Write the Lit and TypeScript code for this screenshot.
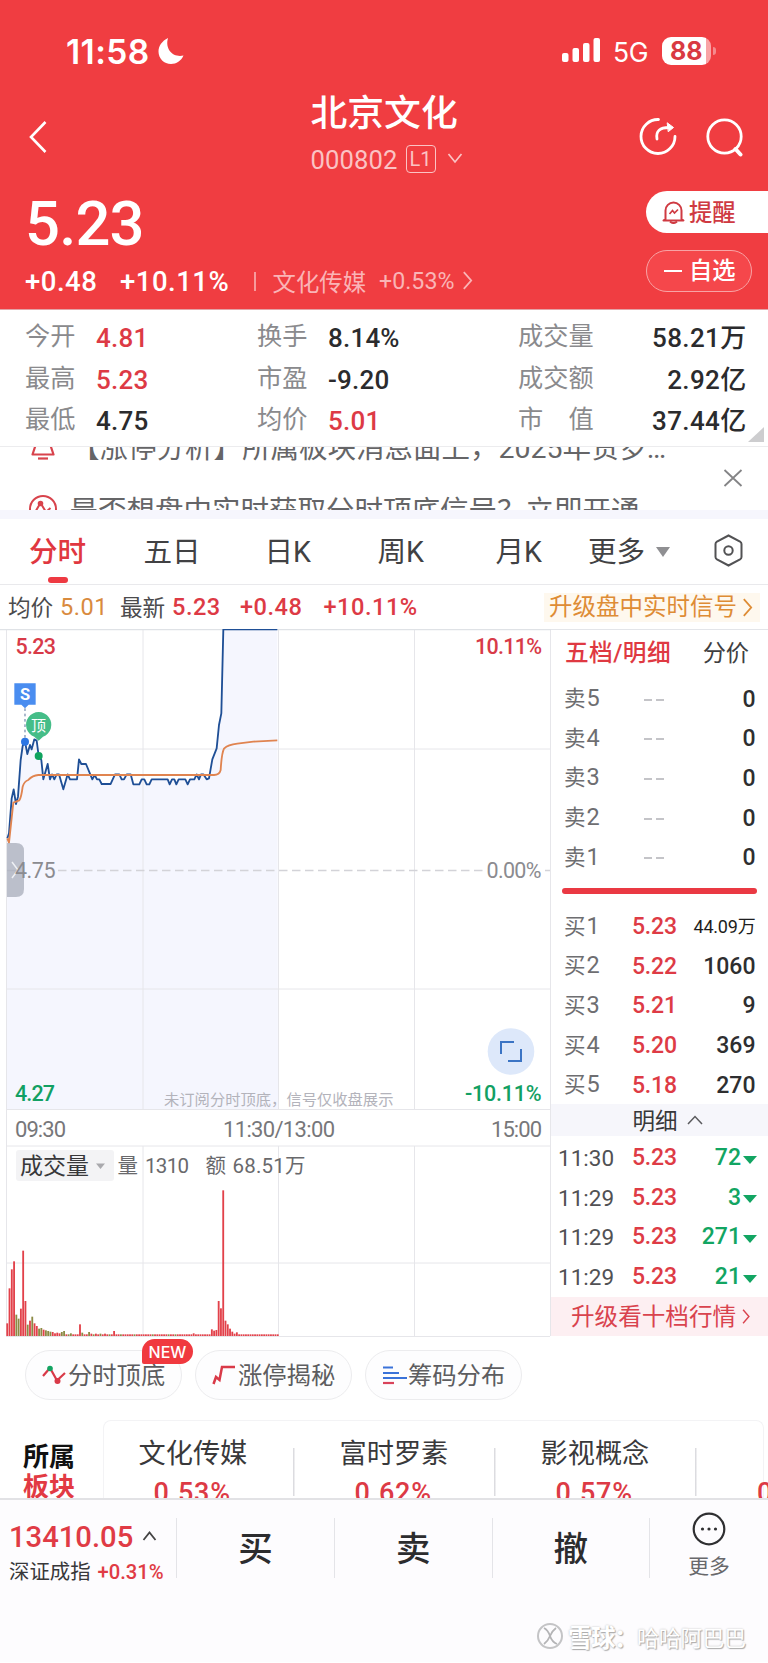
import { LitElement, html, svg, css } from "lit";
import { customElement } from "lit/decorators.js";

const PRICE =
  "22,655 27,640 35,535 41,508 48,552 54,530 62,420 68,378 75,365 82,402 90,375 95,388 103,358 110,362 116,408 124,420 130,478 143,432 150,478 156,463 163,478 170,463 177,463 190,508 203,463 210,478 231,478 237,418 244,432 258,432 277,478 284,465 291,478 298,478 305,492 332,492 345,463 358,463 365,478 372,478 380,463 392,463 400,493 418,493 425,478 433,478 440,493 448,493 455,478 503,478 509,493 516,478 523,478 529,493 536,478 556,478 563,493 570,478 583,478 590,463 597,478 603,463 610,463 620,478 627,475 637,418 650,385 657,315 664,280 670,28 832,28";

const VOLUMES: Record<number, number> = {
  0: 38, 1: 143, 2: 200, 3: 224, 4: 64, 5: 52, 6: 82, 7: 256, 8: 105, 9: 34, 10: 46, 11: 58, 12: 38, 13: 30,
  14: 22, 15: 24, 16: 19, 17: 17, 18: 15, 19: 13, 20: 12, 21: 8, 22: 10, 23: 8, 24: 12, 25: 15, 28: 8, 32: 35,
  33: 10, 36: 12, 37: 7, 39: 7, 41: 7, 43: 7, 47: 15, 82: 8, 90: 20, 91: 16, 92: 18, 93: 105, 94: 83, 95: 437,
  96: 46, 97: 35, 98: 22, 99: 13, 100: 7, 101: 11,
};
const FALLING = new Set([4, 5, 9, 11, 14, 15, 17, 18, 19, 24, 25, 27, 28, 33, 36, 38, 41, 45, 50, 56, 64, 71, 74]);

const STATS = [
  ["今开", "4.81", "up", "换手", "8.14%", "", "成交量", "58.21万"],
  ["最高", "5.23", "up", "市盈", "-9.20", "", "成交额", "2.92亿"],
  ["最低", "4.75", "", "均价", "5.01", "up", "市　值", "37.44亿"],
];
const BUYS = [
  ["买1", "5.23", "44.09万"],
  ["买2", "5.22", "1060"],
  ["买3", "5.21", "9"],
  ["买4", "5.20", "369"],
  ["买5", "5.18", "270"],
];
const TRADES = [
  ["11:30", "72"],
  ["11:29", "3"],
  ["11:29", "271"],
  ["11:29", "21"],
];
const BOARDS = [
  ["文化传媒", "0.53%"],
  ["富时罗素", "0.62%"],
  ["影视概念", "0.57%"],
];

const chevronRight = (w: number, h: number) => html`<svg class="chev" width=${w} height=${h} viewBox="0 0 10 18">
  <path d="M1.5 1L8.5 9L1.5 17" fill="none" stroke="currentColor" stroke-width="1.7" />
</svg>`;

const base = css`
  :host {
    display: block;
    font-family: Roboto, "Noto Sans CJK SC", sans-serif;
  }
  * {
    box-sizing: border-box;
  }
  svg {
    display: block;
    flex: none;
  }
  span,
  b {
    white-space: nowrap;
  }
`;

@customElement("quote-header")
class QuoteHeader extends LitElement {
  static styles = [
    base,
    css`
      :host {
        background: #f03d41;
        color: #fff;
        height: 310px;
        border-bottom: 1px solid #e3a3a6;
        overflow: hidden;
      }
      .status {
        display: flex;
        align-items: center;
        height: 46px;
        margin-top: 28px;
        padding: 0 52px 0 66px;
        font-family: Inter, sans-serif;
      }
      .time {
        font-size: 33.500px;
        font-weight: 600;
        letter-spacing: 0.400px;
        width: 91px;
        margin-top: 2px;
      }
      .signal {
        margin-left: auto;
      }
      .net {
        font-size: 26.500px;
        width: 49px;
        margin-left: 12px;
        letter-spacing: -0.300px;
        margin-top: 2px;
      }
      .battery {
        width: 49px;
        height: 28px;
        border-radius: 9px;
        background: linear-gradient(90deg, #fff 44px, #f9a3a6 44px);
        color: #d93a42;
        font-weight: 700;
        font-size: 25px;
        line-height: 28px;
        padding-left: 8px;
      }
      .nub {
        width: 3px;
        height: 8px;
        margin-left: 2px;
        border-radius: 0 3px 3px 0;
        background: #f58a8d;
      }
      .titlebar {
        display: grid;
        grid-template-columns: 30px 1fr auto auto;
        padding: 0 24px 0 23px;
        height: 88px;
        margin-top: 16px;
        align-items: center;
      }
      .titlebar > svg {
        margin-top: 5px;
      }
      .titlebar > .search {
        margin-left: 29px;
      }
      .names {
        padding-left: 257.500px;
      }
      .name {
        font-size: 36.800px;
        line-height: 42px;
        padding-bottom: 4px;
        font-weight: 500;
      }
      .sub {
        display: flex;
        align-items: center;
        height: 34px;
        margin-top: 3px;
        color: #fbc3c4;
      }
      .code {
        font-size: 25.600px;
        width: 95px;
        margin-top: 2px;
        letter-spacing: 0.100px;
      }
      .level {
        width: 30px;
        height: 28px;
        border: 1.500px solid #fbc3c4;
        border-radius: 4px;
        font-size: 20px;
        line-height: 26px;
        text-align: center;
        margin-right: 11px;
      }
      .body {
        display: flex;
        justify-content: space-between;
        padding: 8px 0 0 25px;
      }
      .price {
        font-size: 61.500px;
        font-weight: 500;
        line-height: 76px;
        letter-spacing: -0.800px;
      }
      .change {
        display: flex;
        align-items: center;
        height: 32px;
        margin-top: 4px;
        font-size: 27.500px;
        font-weight: 500;
      }
      .change > span {
        letter-spacing: 0.500px;
        margin-top: -1px;
      }
      .change .abs {
        width: 95px;
      }
      .change .pct {
        width: 134px;
      }
      .rule {
        width: 1.500px;
        height: 19px;
        background: #f79a9c;
        margin-right: 17px;
        margin-top: -2px;
      }
      .sector {
        display: flex;
        align-items: center;
        color: #fab4b6;
        font-weight: 400;
        font-size: 23.400px;
        margin-top: -3px;
      }
      .sector .pc {
        margin: 0 8px 0 13px;
        font-size: 23.200px;
      }
      .side {
        width: 122px;
        padding-top: 5px;
      }
      .btn {
        display: flex;
        align-items: center;
        height: 42px;
        padding-left: 16px;
        font-size: 23.300px;
        font-weight: 500;
      }
      .btn span {
        margin-top: -3px;
      }
      .remind {
        background: #fff;
        color: #cf3a42;
        border-radius: 21px 0 0 21px;
      }
      .remind svg {
        margin-right: 4px;
      }
      .watch {
        width: 106px;
        margin-top: 16.500px;
        border-radius: 21px;
        border: 1.500px solid #f8a3a5;
        background: #f5474b;
      }
      .dash {
        width: 18px;
        height: 2px;
        background: #fff;
        margin: 0 7px 0 1px;
      }
    `,
  ];
  render() {
    return html`
      <div class="status">
        <span class="time">11:58</span>
        <svg width="28" height="28" viewBox="0 0 28 28">
          <path d="M11 1C5 4 1.500 9 1.500 14.500C1.500 21.500 7 27 14 27C19.500 27 24 24 26.500 18.500C17 21 7.500 13 11 1Z" fill="#fff" />
        </svg>
        <svg class="signal" width="40" height="26" viewBox="0 0 40 26" fill="#fff">
          <rect x="1" y="15" width="6.500" height="9" rx="2" /><rect x="11.500" y="10" width="6.500" height="14" rx="2" />
          <rect x="22" y="5" width="6.500" height="19" rx="2" /><rect x="32.500" y="0" width="6.500" height="24" rx="2" />
        </svg>
        <span class="net">5G</span>
        <div class="battery">88</div>
        <div class="nub"></div>
      </div>
      <div class="titlebar">
        <svg width="30" height="34" viewBox="0 0 30 34"><path d="M22.500 2L8 17L22.500 32" fill="none" stroke="#fff" stroke-width="2.600" /></svg>
        <div class="names">
          <div class="name">北京文化</div>
          <div class="sub">
            <span class="code">000802</span><span class="level">L1</span>
            <svg width="16" height="12" viewBox="0 0 16 12"><path d="M1.500 1L8 9L14.500 1" fill="none" stroke="currentColor" stroke-width="1.700" /></svg>
          </div>
        </div>
        <svg width="38" height="40" viewBox="0 0 38 40" fill="none" stroke="#fff" stroke-width="2.800" stroke-linecap="round">
          <path d="M19.500 2.500A17 17 0 1 0 36 19.500" /><path d="M18 22C16.500 14 21 10.500 30 10.500" /><path d="M28.500 6L34.500 10.500L29.500 14.500Z" fill="#fff" stroke-width="1" />
        </svg>
        <svg class="search" width="38" height="40" viewBox="0 0 38 40" fill="none" stroke="#fff" stroke-width="2.800" stroke-linecap="round">
          <circle cx="18.500" cy="19.500" r="16.700" /><path d="M29.500 32L34.500 37.500" stroke-width="4" />
        </svg>
      </div>
      <div class="body">
        <div>
          <div class="price">5.23</div>
          <div class="change">
            <span class="abs">+0.48</span><span class="pct">+10.11%</span>
            <div class="rule"></div>
            <div class="sector"><span>文化传媒</span><span class="pc">+0.53%</span>${chevronRight(11, 19)}</div>
          </div>
        </div>
        <div class="side">
          <div class="btn remind">
            <svg width="23" height="24" viewBox="0 0 23 24" fill="none" stroke="#cf3a42" stroke-width="2">
              <path d="M3.500 19V10.500A8 8 0 0 1 19.500 10.500V19L21.500 20.500H1.500Z" stroke-linejoin="round" />
              <path d="M8 21.500Q11.500 24.500 15 21.500" /><path d="M7.500 14L10.500 10.500L12.500 13L16 9.500" stroke-width="1.700" />
            </svg>
            <span>提醒</span>
          </div>
          <div class="btn watch"><div class="dash"></div><span>自选</span></div>
        </div>
      </div>
    `;
  }
}

@customElement("quote-stats")
class QuoteStats extends LitElement {
  static styles = [
    base,
    css`
      .stats {
        position: relative;
        height: 137px;
        padding: 7px 22px 0 25px;
        border-bottom: 1px solid #ececee;
      }
      .row {
        display: grid;
        grid-template-columns: 71px 161px 71px 190px 1fr;
        height: 41.400px;
        align-items: center;
        font-size: 25.200px;
        line-height: 28px;
        color: #8a8a8d;
      }
      .row span {
        margin-top: -1px;
      }
      .row .v {
        font-size: 26px;
        font-weight: 500;
        color: #2b2b2d;
        letter-spacing: 0.200px;
        margin-top: 1px;
      }
      .row .v.up {
        color: #dd3a45;
      }
      .last {
        display: flex;
        justify-content: space-between;
        width: 228.500px;
        align-items: center;
      }
      .row .last .v {
        margin-top: 1px;
        letter-spacing: 0.350px;
      }
      .fold {
        position: absolute;
        right: 4px;
        bottom: 4px;
        border-left: 16px solid transparent;
        border-bottom: 15px solid #cdcdcf;
      }
      .news {
        display: grid;
        grid-template-columns: 1fr 45px;
        height: 63px;
        overflow: hidden;
        color: #656567;
      }
      .lines {
        margin-top: -21px;
      }
      .line {
        display: flex;
        align-items: center;
        height: 40px;
        margin-bottom: 23px;
        padding-left: 28px;
        font-size: 28.500px;
        line-height: 34px;
      }
      .line span {
        margin: 5px 0 0 11.500px;
      }
      .line .lead {
        margin: 5px 0 0 14px;
      }
      .dots {
        letter-spacing: 4px;
        font-size: 30px;
      }
      .close {
        margin: 22px 0 0 0;
      }
      .band {
        height: 9px;
        background: #f6f6fd;
      }
      .tabs {
        display: grid;
        grid-template-columns: 114.500px 121px 113px 118px 92.500px 126px 1fr;
        height: 66px;
        padding: 3px 0 0 29px;
        align-items: start;
        font-size: 28.600px;
        line-height: 60px;
        color: #414143;
        border-bottom: 1.500px solid #e9e9ec;
      }
      .on {
        color: #e03740;
        font-weight: 500;
        width: 58px;
      }
      .on::after {
        content: "";
        display: block;
        width: 20px;
        height: 6px;
        border-radius: 3px;
        background: #ee3a42;
        margin: -5px 0 0 18.500px;
      }
      .more {
        display: flex;
        align-items: center;
        gap: 11px;
      }
      .tri {
        border: 7.500px solid transparent;
        border-top: 10px solid #8f8f92;
        border-bottom: 0;
      }
      .gear {
        margin-top: 12px;
      }
      .info {
        display: flex;
        align-items: center;
        height: 44px;
        padding-left: 8px;
        font-size: 22.600px;
        color: #4b4b4d;
      }
      .info > span {
        margin-top: -2px;
      }
      .info > .n {
        margin-top: 0;
        font-size: 23.600px;
        font-weight: 500;
        letter-spacing: 0.500px;
        color: #dd3a45;
      }
      .info > .avg {
        color: #d98a3e;
        font-weight: 400;
        width: 60px;
      }
      .lbl {
        width: 52px;
      }
      .up1 {
        width: 68px;
      }
      .up2 {
        width: 83.500px;
      }
      .promo {
        display: flex;
        align-items: center;
        gap: 5px;
        margin-left: auto;
        margin-right: 8px;
        height: 29px;
        padding: 0 7px 0 5px;
        background: #fef8ee;
        color: #de8c35;
        font-size: 23.500px;
      }
      .promo span {
        margin-top: -4px;
      }
    `,
  ];
  render() {
    return html`
      <div class="stats">
        ${STATS.map(
          (r) => html`<div class="row">
            <span>${r[0]}</span><span class="v ${r[2]}">${r[1]}</span><span>${r[3]}</span><span class="v ${r[5]}">${r[4]}</span>
            <div class="last"><span>${r[6]}</span><span class="v">${r[7]}</span></div>
          </div>`
        )}
        <div class="fold"></div>
      </div>
      <div class="news">
        <div class="lines">
          <div class="line">
            <svg width="29" height="30" viewBox="0 0 29 30" fill="none" stroke="#d8434c" stroke-width="2.200">
              <path d="M7 16V9A8 8 0 0 1 23 9V16L25.500 23.500H4.500Z" stroke-linejoin="round" /><path d="M10 27.500H20" />
            </svg>
            <span class="lead">【涨停分析】所属板块消息面上，2025年贺岁<i class="dots">…</i></span>
          </div>
          <div class="line">
            <svg width="30" height="30" viewBox="0 0 30 30" fill="none" stroke="#d8434c" stroke-width="2">
              <circle cx="15" cy="15" r="13" /><path d="M6 20L12.500 9L18 18L22.500 14" /><circle cx="12.500" cy="9.500" r="1.800" fill="#d8434c" />
            </svg>
            <span>是否想盘中实时获取分时顶底信号？立即开通</span>
          </div>
        </div>
        <svg class="close" width="20" height="18" viewBox="0 0 20 18"><path d="M1.500 1L18.500 17M18.500 1L1.500 17" stroke="#848486" stroke-width="1.800" /></svg>
      </div>
      <div class="band"></div>
      <div class="tabs">
        <div class="on">分时</div><span>五日</span><span>日K</span><span>周K</span><span>月K</span>
        <div class="more"><span>更多</span><div class="tri"></div></div>
        <svg class="gear" width="29" height="33" viewBox="0 0 29 33" fill="none" stroke="#525254" stroke-width="2">
          <path d="M14.500 1.500L26 7.500Q27.500 8.500 27.500 10V23Q27.500 24.500 26 25.500L14.500 31.500L3 25.500Q1.500 24.500 1.500 23V10Q1.500 8.500 3 7.500Z" /><circle cx="14.500" cy="16.500" r="4.200" />
        </svg>
      </div>
      <div class="info">
        <span class="lbl">均价</span><span class="n avg">5.01</span><span class="lbl">最新</span><span class="n up1">5.23</span
        ><span class="n up2">+0.48</span><span class="n">+10.11%</span>
        <div class="promo"><span>升级盘中实时信号</span>${chevronRight(11, 19)}</div>
      </div>
    `;
  }
}

@customElement("minute-chart")
class MinuteChart extends LitElement {
  static styles = [
    base,
    css`
      :host {
        flex: none;
        width: 551px;
        height: 709px;
      }
      .grid {
        stroke: #e6e6ea;
        stroke-width: 1;
        fill: none;
      }
      .lb {
        font-size: 21.500px;
        font-weight: 500;
      }
      .up {
        fill: #d83a48;
      }
      .mid {
        fill: #8b8b90;
        font-weight: 400;
      }
      .down {
        fill: #12a063;
      }
      .axis {
        fill: #77777a;
        font-weight: 400;
        font-size: 22px;
      }
      .hint {
        font-size: 15.300px;
        fill: #b3b3bb;
      }
      .vt {
        font-size: 23px;
        fill: #38383a;
      }
      .vs {
        font-size: 20.500px;
        fill: #69696c;
      }
      .pin {
        font-size: 15px;
        fill: #fff;
        text-anchor: middle;
      }
      .s {
        font-size: 16.500px;
        font-weight: 700;
      }
    `,
  ];
  render() {
    const bars = Array.from({ length: 120 }, (_, i) => {
      const h = VOLUMES[i] ?? 5;
      return svg`<rect x=${19 + i * 6.82} y=${2121 - h} width="5.500" height=${h} fill=${FALLING.has(i) ? "#8c8a45" : "#e2414a"} />`;
    });
    return html`<svg width="551" height="709" viewBox="0 0 551 709">
      <g transform="translate(0 -9) scale(.33333)">
        <polygon points="${PRICE} 834,1467 20,1467" fill="#f5f6fe" />
      </g>
      <path class="grid" d="M6.500 0V708M143 0V480M143 517V707M278.500 0V480M278.500 517V707M414.500 0V480M414.500 517V707M550.500 0V707M6.500 120H550M6.500 360H550M6.500 480.500H550M6.500 517H550M6.500 634H550M6.500 707.500H550" />
      <path d="M0 .5H551" stroke="#dfe2e6" stroke-width="1.500" />
      <path d="M7 241.500H16M58 241.500H485M545 241.500H550" stroke="#d3d3d8" stroke-width="1.500" stroke-dasharray="8.500 4.500" />
      <g transform="translate(0 -9) scale(.33333)" fill="none" stroke-linejoin="round">
        <polyline points=${PRICE} stroke="#1f4f96" stroke-width="5.500" />
        <path d="M22 655L27 668L40 548L58 541Q64 532 68 500Q73 484 85 480Q98 466 115 465H640Q658 466 662 450Q665 400 672 386Q684 374 712 371L760 365L832 361" stroke="#e08450" stroke-width="5.500" />
        <path d="M75 265V360" stroke="#56729c" stroke-width="3" stroke-dasharray="8 8" />
        <circle cx="75" cy="365" r="12" fill="#2c76e4" /><circle cx="116" cy="408" r="12" fill="#10a35e" />
        <path d="M43 190H107V254H86L75 265L64 254H43Z" fill="#4a8df0" />
        <path d="M116 362L103 350A38 38 0 1 1 129 350Z" fill="#45bd88" />
      </g>
      <text class="pin s" x="25" y="71">S</text>
      <text class="pin" x="38.600" y="102">顶</text>
      <path d="M7 214H16Q24 214 24 222V260Q24 268 16 268H7Z" fill="#aab0bd" opacity=".78" />
      <path d="M12 233L18 241L12 249" fill="none" stroke="#eef0f4" stroke-width="1.500" />
      <text class="lb up" x="15.500" y="25" textLength="40.500">5.23</text>
      <text class="lb up" x="475" y="25" textLength="67">10.11%</text>
      <text class="lb mid" x="15" y="249" textLength="40.500">4.75</text>
      <text class="lb mid" x="486.500" y="249" textLength="55">0.00%</text>
      <text class="lb down" x="15" y="472" textLength="40">4.27</text>
      <text class="lb down" x="465" y="472" textLength="76.500">-10.11%</text>
      <text class="hint" x="164" y="476">未订阅分时顶底，信号仅收盘展示</text>
      <circle cx="511" cy="422.500" r="23.300" fill="#dde8fa" />
      <path d="M501 425V413H514M521 420V432H508" fill="none" stroke="#3b74c4" stroke-width="2" />
      <text class="axis" x="15" y="508" textLength="51">09:30</text>
      <text class="axis" x="223" y="508" textLength="112">11:30/13:00</text>
      <text class="axis" x="491" y="508" textLength="51">15:00</text>
      <rect x="16" y="521" width="98" height="31" rx="3" fill="#f3f3f5" />
      <text class="vt" x="20" y="545">成交量</text>
      <path d="M96 534.500H105L100.500 540Z" fill="#a9a9ad" />
      <text class="vs" x="117.500" y="544">量</text>
      <text class="vs" x="145" y="544" textLength="44">1310</text>
      <text class="vs" x="205.500" y="544">额</text>
      <text class="vs" x="232.500" y="544" textLength="73">68.51万</text>
      <g transform="scale(.33333)">${bars}</g>
    </svg>`;
  }
}

@customElement("order-book")
class OrderBook extends LitElement {
  static styles = [
    base,
    css`
      :host {
        flex: 1;
        min-width: 0;
        border-top: 1.500px solid #e3e5e9;
      }
      .head {
        display: flex;
        justify-content: space-between;
        padding: 0 19px 0 14px;
        height: 50px;
        line-height: 47px;
        font-size: 23.200px;
        color: #3f3f42;
      }
      .head b {
        font-weight: 500;
        font-size: 23.700px;
        letter-spacing: 0.400px;
        color: #df3942;
      }
      .row {
        display: grid;
        grid-template-columns: 68px 60px minmax(0, 1fr);
        height: 39.600px;
        align-items: center;
        padding: 0 12.500px 0 13px;
        line-height: 30px;
      }
      .k {
        font-size: 21.500px;
        color: #6e6e71;
        padding-bottom: 2px;
      }
      .k i {
        font-style: normal;
        font-size: 23.500px;
        margin-left: 1px;
      }
      .p {
        font-size: 23px;
        font-weight: 500;
        letter-spacing: -0.200px;
        color: #de3b45;
      }
      .none {
        padding-left: 12px;
        display: flex;
        gap: 4px;
      }
      .none::before,
      .none::after {
        content: "";
        width: 8px;
        height: 2px;
        background: #c4c4c8;
      }
      .q {
        text-align: right;
        font-size: 23px;
        font-weight: 500;
        color: #2e2e30;
      }
      .q.small {
        font-size: 18px;
        font-weight: 400;
        letter-spacing: -0.200px;
        color: #1e1e20;
      }
      .bar {
        height: 6px;
        border-radius: 3px;
        background: #ea3943;
        margin: 10px 11px 13.500px;
      }
      .mid {
        display: flex;
        align-items: center;
        justify-content: center;
        gap: 9px;
        height: 32px;
        background: #f6f6fb;
        font-size: 22.500px;
        color: #38383a;
        padding-left: 16px;
        margin-top: -1px;
        margin-bottom: 2px;
      }
      .mid span {
        margin-top: -3px;
      }
      .trades .row {
        height: 39.600px;
        padding: 0 11px 0 7px;
        grid-template-columns: 74px 60px minmax(0, 1fr);
      }
      .t {
        font-size: 22.500px;
        color: #515154;
      }
      .g {
        display: flex;
        align-items: center;
        justify-content: flex-end;
        gap: 2px;
        color: #12a562;
        font-size: 23px;
        font-weight: 500;
      }
      .g svg {
        margin-top: 3px;
      }
      .up {
        display: flex;
        align-items: center;
        gap: 5px;
        height: 39px;
        padding-left: 20px;
        background: #fdeff2;
        color: #d9434e;
        font-size: 23.600px;
      }
      .up span {
        margin-top: -2px;
      }
    `,
  ];
  render() {
    return html`
      <div class="head"><b>五档/明细</b><span>分价</span></div>
      ${[5, 4, 3, 2, 1].map(
        (n) => html`<div class="row"><span class="k">卖<i>${n}</i></span><div class="none"></div><span class="q">0</span></div>`
      )}
      <div class="bar"></div>
      ${BUYS.map(
        ([k, p, q]) => html`<div class="row">
          <span class="k">${k[0]}<i>${k[1]}</i></span><span class="p">${p}</span><span class="q ${q.endsWith("万") ? "small" : ""}">${q}</span>
        </div>`
      )}
      <div class="mid">
        <span>明细</span>
        <svg width="16" height="10" viewBox="0 0 16 10"><path d="M1 9L8 1.500L15 9" fill="none" stroke="#5a5a5d" stroke-width="1.500" /></svg>
      </div>
      <div class="trades">
        ${TRADES.map(
          ([t, q]) => html`<div class="row">
            <span class="t">${t}</span><span class="p">5.23</span>
            <div class="g"><span>${q}</span><svg width="14" height="8" viewBox="0 0 14 8"><path d="M0 0H14L7 8Z" fill="#12a562" /></svg></div>
          </div>`
        )}
      </div>
      <div class="up"><span>升级看十档行情</span>${chevronRight(10, 15)}</div>
    `;
  }
}

@customElement("quote-footer")
class QuoteFooter extends LitElement {
  static styles = [
    base,
    css`
      .pills {
        display: flex;
        gap: 13px;
        padding: 13px 0 0 25px;
        height: 83px;
      }
      .pill {
        position: relative;
        display: flex;
        align-items: center;
        width: 157px;
        height: 50px;
        border: 1.500px solid #ececee;
        border-radius: 25px;
        background: #fdfdfe;
        font-size: 24.300px;
        color: #5d5d60;
        padding-left: 14.500px;
      }
      .pill > svg {
        margin-right: 1.500px;
      }
      .pill > span {
        margin-top: -3px;
      }
      .new {
        position: absolute;
        left: 116px;
        top: -12px;
        width: 51px;
        height: 25px;
        border-radius: 13px 13px 13px 2px;
        background: #f0393f;
        color: #fff;
        font: 500 16px/26px Inter, sans-serif;
        text-align: center;
      }
      .boards {
        display: flex;
        height: 78px;
        overflow: hidden;
      }
      .own {
        width: 103px;
        padding: 22px 0 0 23px;
        font-size: 26px;
        line-height: 30px;
        font-weight: 700;
        color: #111;
      }
      .own div + div {
        color: #e23a43;
      }
      .list {
        display: flex;
        width: 661px;
        flex: none;
        border: 1.500px solid #f3f3f5;
        border-bottom: 0;
        border-radius: 8px 8px 0 0;
      }
      .board {
        flex: none;
        width: 201px;
        padding: 14.500px 0 0 34.500px;
        background: linear-gradient(#dcdce0, #dcdce0) 189px 27px / 1.500px 48px no-repeat;
      }
      .bn {
        font-size: 27.200px;
        line-height: 36px;
        color: #39393b;
      }
      .bp {
        font-size: 27px;
        line-height: 30px;
        font-weight: 500;
        letter-spacing: 0.800px;
        color: #dd3a45;
        padding: 6px 0 0 15px;
      }
      .cut {
        padding: 50.500px 0 0 35px;
      }
      .bar {
        display: grid;
        grid-template-columns: 176px 158px 157.500px 157.500px 1fr;
        height: 164px;
        border-top: 2px solid #e2e2e5;
        background: #fdfcfe;
      }
      .index {
        padding: 19px 0 0 9px;
      }
      .iv {
        display: flex;
        align-items: center;
        gap: 9px;
        height: 36px;
        font-size: 29.200px;
        font-weight: 500;
        color: #e03b45;
      }
      .iv svg {
        margin-top: -3px;
      }
      .in {
        display: flex;
        gap: 7px;
        line-height: 34px;
        font-size: 20.400px;
        color: #38383a;
      }
      .in b {
        font-weight: 500;
        font-size: 20.200px;
        color: #e03b45;
      }
      .act {
        height: 60px;
        margin-top: 18px;
        border-left: 1.500px solid #e4e4e8;
        text-align: center;
        font-size: 34.500px;
        line-height: 62px;
        font-weight: 500;
        color: #2c2c2e;
      }
      .more {
        display: flex;
        flex-direction: column;
        align-items: center;
        height: 60px;
        margin-top: 18px;
        border-left: 1.500px solid #e4e4e8;
        line-height: 40px;
        font-size: 20.800px;
        color: #68686b;
      }
      .more svg {
        margin: -6px 0 1px;
      }
      .mark {
        display: flex;
        align-items: center;
        justify-content: flex-end;
        height: 34px;
        margin-top: -43px;
        padding-right: 22px;
        color: #fff;
        text-shadow: 1px 1px 1px #aaa, 0 0 2px #bbb;
        font-size: 21.800px;
      }
      .mark b {
        font-size: 24.500px;
        font-weight: 700;
        letter-spacing: -1.500px;
        margin-left: 4px;
      }
    `,
  ];
  render() {
    return html`
      <div class="pills">
        <div class="pill">
          <svg width="26" height="22" viewBox="0 0 26 22" fill="none" stroke="#d93a48" stroke-width="2.200">
            <path d="M2 12L9 4L16 16.500L24 9" /><circle cx="9" cy="4.500" r="2.800" fill="#12a562" stroke="none" /><circle cx="16.500" cy="17" r="3" fill="#d93a48" stroke="none" />
          </svg>
          <span>分时顶底</span>
          <div class="new">NEW</div>
        </div>
        <div class="pill">
          <svg width="26" height="22" viewBox="0 0 26 22" fill="none" stroke="#d93a48" stroke-width="2.500"><path d="M2.500 20L5 13L8.500 16L11 3H24" /></svg>
          <span>涨停揭秘</span>
        </div>
        <div class="pill">
          <svg width="26" height="22" viewBox="0 0 26 22" fill="none" stroke="#3a73d9" stroke-width="2.200">
            <path d="M2 3.500H12M2 9H18M2 14H26" /><path d="M2 19H13" stroke="#d9435a" />
          </svg>
          <span>筹码分布</span>
        </div>
      </div>
      <div class="boards">
        <div class="own"><div>所属</div><div>板块</div></div>
        <div class="list">
          ${BOARDS.map(([n, p]) => html`<div class="board"><div class="bn">${n}</div><div class="bp">${p}</div></div>`)}
          <div class="cut"><div class="bp">0</div></div>
        </div>
      </div>
      <div class="bar">
        <div class="index">
          <div class="iv">
            <span>13410.05</span>
            <svg width="15" height="10" viewBox="0 0 15 10"><path d="M1.500 9L7.500 1.500L13.500 9" fill="none" stroke="#444" stroke-width="1.800" /></svg>
          </div>
          <div class="in"><span>深证成指</span><b>+0.31%</b></div>
        </div>
        <div class="act">买</div>
        <div class="act">卖</div>
        <div class="act">撤</div>
        <div class="more">
          <svg width="34" height="34" viewBox="0 0 34 34"><circle cx="17" cy="17" r="15.300" fill="none" stroke="#2f2f31" stroke-width="2.200" />
            <g fill="#2f2f31"><circle cx="10.500" cy="17" r="1.600" /><circle cx="17" cy="17" r="1.600" /><circle cx="23.500" cy="17" r="1.600" /></g></svg>
          <span>更多</span>
        </div>
      </div>
      <div class="mark">
        <svg width="28" height="28" viewBox="0 0 28 28" fill="none">
          <circle cx="14" cy="14" r="12" stroke="#c4c4c6" stroke-width="2" /><path d="M8 6Q12 8 14 14Q16 20 21 22M20 6Q16 9 14 14Q12 19 8 22" stroke="#b4b4b6" stroke-width="1.800" />
        </svg>
        <b>雪球：</b><span>哈哈阿巴巴</span>
      </div>
    `;
  }
}

@customElement("app-root")
class AppRoot extends LitElement {
  static styles = [
    base,
    css`
      :host {
        width: 768px;
        height: 1663px;
        overflow: hidden;
        background: #fff;
      }
      .market {
        display: flex;
        height: 708px;
      }
    `,
  ];
  render() {
    return html`
      <quote-header></quote-header>
      <quote-stats></quote-stats>
      <div class="market"><minute-chart></minute-chart><order-book></order-book></div>
      <quote-footer></quote-footer>
    `;
  }
}
